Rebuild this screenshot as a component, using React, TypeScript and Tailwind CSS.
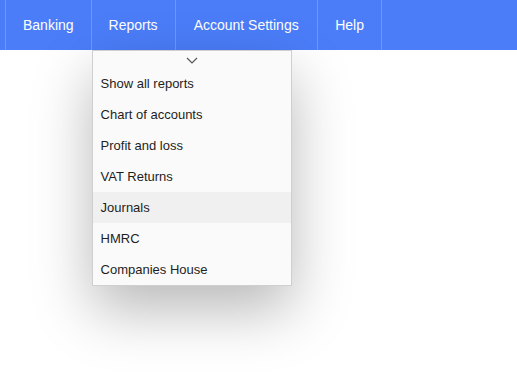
import React from "react";

const items = [
  "Show all reports",
  "Chart of accounts",
  "Profit and loss",
  "VAT Returns",
  "Journals",
  "HMRC",
  "Companies House",
];

export default function App() {
  return (
    <div className="w-[517px] h-[372px] bg-white overflow-hidden" style={{ fontFamily: '"Liberation Sans", Arial, sans-serif' }}>
      <nav className="h-[50px] bg-[#4b7df9] flex pl-[5px]">
        <div className="border-l border-[#6f97fb] px-[17px] flex items-center text-white text-[14px]">Banking</div>
        <div className="relative border-l border-[#6f97fb] px-[17px] flex items-center text-white text-[14px]">
          Reports
          <div className="absolute top-full left-0 w-[200px] bg-[#fafafa] border border-[#cfcfcf] shadow-[0_24px_55px_rgba(0,0,0,0.28)] z-10">
            <div className="h-[17px] flex items-center justify-center">
              <svg width="12" height="7" viewBox="0 0 12 7" fill="none" className="mt-[2px]">
                <path d="M1 1 L6 6 L11 1" stroke="#555" strokeWidth="1.2" />
              </svg>
            </div>
            {items.map((it) => (
              <div
                key={it}
                className={`h-[31px] flex items-center pl-[8px] text-[13px] text-[#1e1e1e] ${it === "Journals" ? "bg-[#f0f0f0]" : ""}`}
              >
                {it}
              </div>
            ))}
          </div>
        </div>
        <div className="border-l border-[#6f97fb] px-[18px] flex items-center text-white text-[14px]">Account Settings</div>
        <div className="border-l border-r border-[#6f97fb] px-[17.5px] flex items-center text-white text-[14px]">Help</div>
      </nav>
    </div>
  );
}
